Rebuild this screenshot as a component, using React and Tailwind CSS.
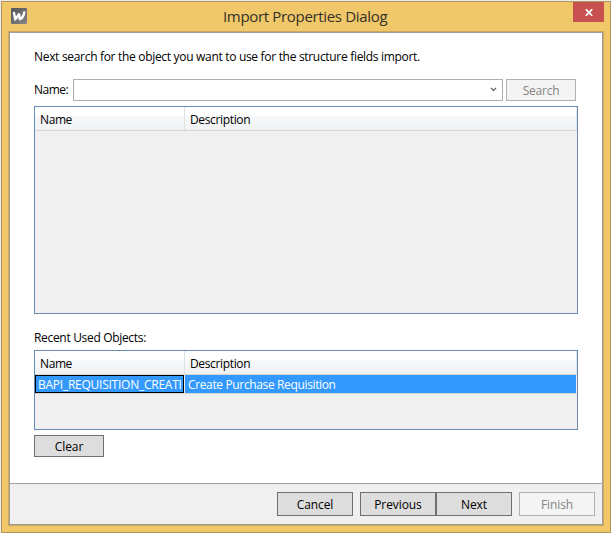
import React from 'react';

function Button({ children, className = '', disabled = false }) {
  const tone = disabled
    ? 'border-[#adb2b5] bg-[#f4f4f4] text-[#838383]'
    : 'border-[#707070] bg-[#dddddd] text-black';
  return (
    <button type="button" disabled={disabled} className={`flex items-center justify-center border pt-[2px] leading-4 tracking-[-0.08px] ${tone} ${className}`}>
      {children}
    </button>
  );
}

function TableHeader() {
  return (
    <div className="flex h-6 shrink-0 border-b border-[#d5d5d5] bg-[linear-gradient(to_bottom,#ffffff_0,#ffffff_9px,#f7f8f9_9px,#f1f2f4_100%)]">
      <div className="flex w-[150px] items-center border-r border-[#dfe1e3] pl-[5px] pt-[3px]"><span className="tracking-[-0.4px]">Name</span></div>
      <div className="flex flex-1 items-center border-r border-[#e4e6e8] pl-[5px] pt-[3px]"><span className="tracking-[-0.35px]">Description</span></div>
    </div>
  );
}

export default function App() {
  return (
    <div className="h-[533px] w-[611px] bg-[#ededed] pl-px pt-px font-['Open_Sans','Noto_Sans',sans-serif] text-[12px] leading-4 text-black">
      <div className="flex h-[532px] w-[610px] flex-col border border-[#b1945a] bg-[#f0c869] px-1.5 pb-1.5">
        <header className="flex h-[29px] shrink-0 items-start">
          <svg className="ml-[3px] mt-[6px] h-4 w-4" viewBox="0 0 16 16">
            <defs>
              <linearGradient id="logo" x1="0" y1="0" x2="1" y2="1">
                <stop offset="0" stopColor="#555557" />
                <stop offset="1" stopColor="#858587" />
              </linearGradient>
            </defs>
            <rect width="16" height="16" rx="1" fill="url(#logo)" />
            <path d="M3 5 4.3 11.4 8 6.2 8.9 11.2 Q12.2 10 13.2 4.5" fill="none" stroke="white" strokeWidth="2.5" strokeLinecap="round" strokeLinejoin="round" />
          </svg>
          <h1 className="ml-[196px] mt-[4px] w-[170px] whitespace-nowrap text-[15px] leading-5 tracking-[-0.33px] text-[#33302a]">Import Properties Dialog</h1>
          <button type="button" aria-label="Close" className="ml-auto flex h-5 w-[31px] items-center justify-center bg-[#c75050] pt-px">
            <svg width="8" height="7" viewBox="0 0 8 7"><path d="M.8 .2 7.2 6.8M7.2 .2 .8 6.8" stroke="white" strokeWidth="1.7" /></svg>
          </button>
        </header>
        <div className="flex flex-1 flex-col border border-[#cea75b]">
          <div className="flex flex-1 flex-col border border-[#9d9d9d] bg-white">
            <main className="flex h-[450px] flex-col px-6">
              <p className="mt-4 whitespace-nowrap tracking-[-0.31px]">Next search for the object you want to use for the structure fields import.</p>
              <div className="mt-[14px] flex h-[22px] shrink-0">
                <label className="w-[39px] whitespace-nowrap pt-[3px] tracking-[-0.5px]">Name:</label>
                <div className="flex w-[430px] items-center justify-end border border-[#abadb3] bg-white pb-[2px] pr-[5px]">
                  <svg width="7" height="5" viewBox="0 0 7 5"><path d="M1 1 3.5 3.5 6 1" fill="none" stroke="#707070" strokeWidth="1.4" /></svg>
                </div>
                <Button disabled className="ml-[3px] w-[70px]"><span className="tracking-[-0.25px]">Search</span></Button>
              </div>
              <div className="mt-[5px] flex h-[208px] w-[544px] shrink-0 flex-col border border-[#688caf] bg-[#f0f0f0]">
                <TableHeader />
              </div>
              <div className="mt-4 tracking-[-0.32px]">Recent Used Objects:</div>
              <div className="mt-[4px] flex h-[80px] w-[544px] shrink-0 flex-col border border-[#688caf] bg-[#f0f0f0]">
                <TableHeader />
                <div className="flex h-[19px] border-b border-[#d5d5d5] text-white">
                  <div className="mr-px w-[149px] border border-black bg-[#3399ff] px-[2px] pt-px">
                    <div className="h-[15px] overflow-hidden whitespace-nowrap tracking-[-0.25px]">BAPI_REQUISITION_CREATE</div>
                  </div>
                  <div className="mr-px flex-1 bg-[#3399ff] pl-[3px] pt-[2px] tracking-[-0.36px]">Create Purchase Requisition</div>
                </div>
              </div>
              <Button className="mt-[5px] h-[22px] w-[70px]">Clear</Button>
            </main>
            <footer className="flex flex-1 items-start border-t border-[#a0a0a0] bg-[#f0f0f0] pl-[267px] pt-2">
              <Button className="h-6 w-[76px]">Cancel</Button>
              <Button className="ml-[7px] h-6 w-[76px]">Previous</Button>
              <Button className="h-6 w-[76px]">Next</Button>
              <Button disabled className="ml-[7px] h-6 w-[76px]">Finish</Button>
            </footer>
          </div>
        </div>
      </div>
    </div>
  );
}
